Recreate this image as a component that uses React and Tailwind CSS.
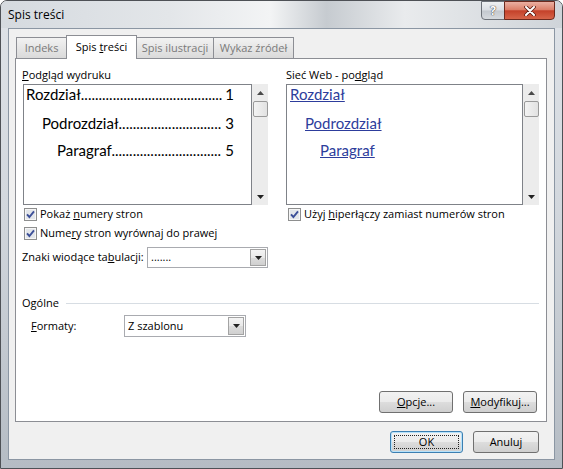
import React from "react";

function CheckBox() {
  return (
    <svg width="13" height="13" viewBox="0 0 13 13" className="shrink-0">
      <rect x="0.5" y="0.5" width="12" height="12" fill="#f6f6f6" stroke="#8e8f8f" />
      <rect x="2" y="2" width="9" height="9" fill="#e3e6ea" />
      <path d="M3 6.3 L5.4 9 L10 3.4" stroke="#3c4f98" strokeWidth="1.9" fill="none" />
    </svg>
  );
}

function Check({ children }) {
  return (
    <div className="flex items-center h-[19px] pl-[2px]">
      <CheckBox />
      <span className="ml-[3px]">{children}</span>
    </div>
  );
}

function DownTri() {
  return (
    <svg width="7" height="4" viewBox="0 0 7 4">
      <path d="M0 0 H7 L3.5 4 Z" fill="#222" />
    </svg>
  );
}

function Combo({ text, className }) {
  return (
    <div className={"flex bg-white border border-[#a9abb0] " + className}>
      <span className="flex-1 pl-[3px] flex items-center">{text}</span>
      <div className="m-px w-[16px] border border-[#a3a3a3] bg-[linear-gradient(180deg,#f4f4f4_0%,#e9e9e9_50%,#dcdcdc_51%,#d0d0d0_100%)] flex items-center justify-center">
        <DownTri />
      </div>
    </div>
  );
}

function ScrollBar() {
  return (
    <div className="w-[16px] bg-[#ececec] flex flex-col items-center">
      <div className="h-[17px] flex items-center justify-center">
        <svg width="7" height="4" viewBox="0 0 7 4">
          <path d="M0 4 H7 L3.5 0 Z" fill="#4a4a4a" />
        </svg>
      </div>
      <div className="w-[15px] h-[16px] border border-[#9a9a9a] rounded-[2px] bg-[linear-gradient(90deg,#f3f3f3_0%,#e2e2e2_100%)]" />
      <div className="flex-1" />
      <div className="h-[17px] flex items-center justify-center">
        <DownTri />
      </div>
    </div>
  );
}

function Btn({ children, className }) {
  return (
    <div
      className={
        "h-[22px] flex items-center justify-center rounded-[3px] border border-[#707070] bg-[linear-gradient(180deg,#f2f2f2_0%,#ebebeb_50%,#dddddd_51%,#cfcfcf_100%)] " +
        className
      }
    >
      <span>{children}</span>
    </div>
  );
}

function Tab({ children, className }) {
  return (
    <div
      className={
        "h-[21px] mb-[1px] border border-b-0 border-[#8c8e94] bg-[linear-gradient(180deg,#f2f2f2_0%,#e6e6e6_50%,#dadada_100%)] text-[#7a7a7a] flex items-center justify-center " +
        className
      }
    >
      <span>{children}</span>
    </div>
  );
}

// one line of the print preview: title, dot leader, page number
function TocLine({ label, dots, num, className }) {
  return (
    <div className={"flex justify-between " + className}>
      <span>
        {label}
        {".".repeat(dots)}
      </span>
      <span>{num}</span>
    </div>
  );
}

const App = () => {
  return (
    <div className="w-[563px] h-[469px] font-['Open_Sans',sans-serif] text-[11px] text-black">
      <div className="w-full h-full flex flex-col rounded-t-[7px] border border-[#4e5156] bg-[linear-gradient(180deg,#dfe3e8_0%,#d2d7dd_45%,#b5bcc4_100%)] overflow-hidden">
        {/* title bar */}
        <div className="h-[27px] flex bg-[linear-gradient(90deg,#d5dadf_0%,#e3e6e9_30%,#f3f4f5_48%,#c6cbd0_58%,#e9ebed_72%,#cfd4d9_100%)]">
          <span className="pl-[7px] self-center text-[12px] leading-none">Spis treści</span>
          <div className="ml-auto mr-[7px] flex self-start h-[19px]">
            <div className="w-[24px] border border-[#6c7178] rounded-bl-[4px] bg-[linear-gradient(180deg,#eef0f2_0%,#dadee3_48%,#c3c8ce_52%,#d6dade_100%)] flex items-center justify-center">
              <span className="text-white font-bold text-[12px] leading-none [text-shadow:0_0_1px_#333,0_0_1px_#333]">?</span>
            </div>
            <div className="w-[51px] -ml-px border border-[#6d2a1e] rounded-br-[4px] bg-[linear-gradient(180deg,#eab0a2_0%,#dc7f69_45%,#c4412a_52%,#d6654a_100%)] flex items-center justify-center">
              <svg width="12" height="10" viewBox="0 0 12 10">
                <path d="M2 1 L10 9 M10 1 L2 9" stroke="#5a1b12" strokeWidth="3.6" strokeLinecap="round" />
                <path d="M2 1 L10 9 M10 1 L2 9" stroke="#ffffff" strokeWidth="2" strokeLinecap="round" />
              </svg>
            </div>
          </div>
        </div>

        {/* client */}
        <div className="flex-1 mx-[7px] mb-[8px] border border-[#8b96a3] bg-[#f0f0f0] flex flex-col">
          {/* tabs */}
          <div className="h-[30px] -mb-px ml-[7px] flex items-end relative z-10">
            <Tab className="w-[51px]">Indeks</Tab>
            <div className="h-[24px] w-[71px] -ml-px border border-b-0 border-[#8c8e94] bg-white flex items-center justify-center">
              <span>
                Spis <span className="underline">t</span>reści
              </span>
            </div>
            <Tab className="w-[78px] -ml-px">Spis ilustracji</Tab>
            <Tab className="w-[81px] -ml-px">Wykaz źródeł</Tab>
          </div>

          {/* panel */}
          <div className="h-[364px] ml-[6px] mr-[7px] border border-[#8c8e94] bg-white flex flex-col pl-[6px] pr-[7px]">
            <div className="flex h-[233px]">
              {/* left column */}
              <div className="w-[246px] pt-[8px] flex flex-col">
                <div className="h-[16px] leading-[16px]">
                  <span className="underline">P</span>odgląd wydruku
                </div>
                <div className="mt-[1px] ml-[1px] h-[121px] flex">
                  <div className="w-[229px] border border-[#7f8288] bg-white font-['Lato',sans-serif] text-[15px] leading-[18px] whitespace-nowrap pr-[17px]">
                    <TocLine label="Rozdział" dots={40} num="1" className="pl-[2px]" />
                    <TocLine label="Podrozdział" dots={29} num="3" className="pl-[18px] mt-[11px]" />
                    <TocLine label="Paragraf" dots={31} num="5" className="pl-[33px] mt-[9px]" />
                  </div>
                  <ScrollBar />
                </div>
                <Check>
                  Pokaż <span className="underline">n</span>umery stron
                </Check>
                <Check>
                  Nume<span className="underline">r</span>y stron wyrównaj do prawej
                </Check>
                <div className="mt-[4px] flex items-center">
                  <span className="w-[125px]">
                    Znaki wiodące ta<span className="underline">b</span>ulacji:
                  </span>
                  <Combo text="......." className="w-[121px] h-[21px]" />
                </div>
              </div>

              {/* separator */}
              <div className="ml-[9px] mt-[6px] w-px h-[227px] bg-[#c9c9c9]" />

              {/* right column */}
              <div className="ml-[9px] w-[253px] pt-[8px] flex flex-col">
                <div className="h-[16px] leading-[16px]">
                  Sieć Web - po<span className="underline">d</span>gląd
                </div>
                <div className="mt-[1px] h-[121px] flex">
                  <div className="w-[237px] border border-[#7f8288] bg-white font-['Lato',sans-serif] text-[15px] leading-[18px] text-[#2d3d9c] whitespace-nowrap">
                    <div className="pl-[3px]">
                      <span className="underline">Rozdział</span>
                    </div>
                    <div className="pl-[18px] mt-[11px]">
                      <span className="underline">Podrozdział</span>
                    </div>
                    <div className="pl-[33px] mt-[9px]">
                      <span className="underline">Paragraf</span>
                    </div>
                  </div>
                  <ScrollBar />
                </div>
                <Check>
                  Użyj <span className="underline">h</span>iperłączy zamiast numerów stron
                </Check>
              </div>
            </div>

            {/* Ogólne */}
            <div className="mt-[3px] h-[16px] flex items-center">
              <span>Ogólne</span>
              <div className="flex-1 ml-[7px] h-px bg-[#d7dde3]" />
            </div>
            <div className="mt-[4px] pl-[9px] flex items-center">
              <span className="w-[93px]">
                <span className="underline">F</span>ormaty:
              </span>
              <Combo text="Z szablonu" className="w-[122px] h-[22px]" />
            </div>

            <div className="mt-auto mb-[8px] pr-[2px] flex justify-end gap-[10px]">
              <Btn className="w-[74px]">
                <span className="underline">O</span>pcje...
              </Btn>
              <Btn className="w-[74px]">
                <span className="underline">M</span>odyfikuj...
              </Btn>
            </div>
          </div>

          {/* bottom buttons */}
          <div className="flex justify-end gap-[10px] pt-[9px] mr-[15px]">
            <div className="w-[73px] h-[22px] rounded-[3px] border border-[#3c7fb1] shadow-[inset_0_0_0_1px_#b6e2fb] bg-[linear-gradient(180deg,#f2f2f2_0%,#ebebeb_50%,#dddddd_51%,#cfcfcf_100%)] p-[3px]">
              <div className="w-full h-full border border-dotted border-[#222] flex items-center justify-center">
                <span>OK</span>
              </div>
            </div>
            <Btn className="w-[66px]">Anuluj</Btn>
          </div>
        </div>
      </div>
    </div>
  );
};

export default App;
